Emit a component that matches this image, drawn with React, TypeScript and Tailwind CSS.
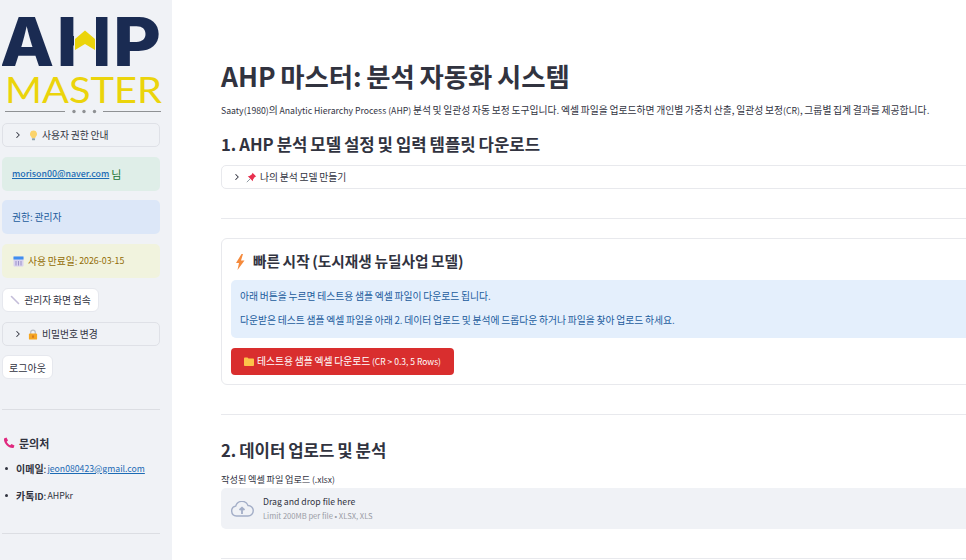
import React from "react";
import { ChevronRight } from "lucide-react";

const font = { fontFamily: '"Noto Sans CJK KR", sans-serif' };

function Logo() {
  return (
    <svg width="160" height="118" viewBox="0 0 160 118" className="block">
      <g fontFamily="Inter, sans-serif" fontWeight="800" fontSize="67" fill="#1a2b52">
        <text transform="translate(-2 66) scale(1.05 1)">A</text>
        <text transform="translate(54.500 66) scale(1.1 1)">H</text>
        <text transform="translate(111 66) scale(1.1 1)">P</text>
      </g>
      <rect x="72" y="17" width="22" height="49" fill="#f0f2f6" />
      <polygon points="73,39 83,30.500 93,39 93,50 83,44 73,50" fill="#ebd40b" />
      <text x="3" y="103" textLength="157" lengthAdjust="spacingAndGlyphs" fontFamily="Lato, sans-serif" fontWeight="400" fontSize="36" fill="#ebd40b">MASTER</text>
      <line x1="3" x2="63" y1="111.500" y2="111.500" stroke="#8f9194" strokeWidth="1" />
      <line x1="101" x2="159" y1="111.500" y2="111.500" stroke="#8f9194" strokeWidth="1" />
      <circle cx="72" cy="111.500" r="1.700" fill="#8f9194" />
      <circle cx="82" cy="111.500" r="1.700" fill="#8f9194" />
      <circle cx="92.500" cy="111.500" r="1.700" fill="#8f9194" />
    </svg>
  );
}

function Expander({ icon, label }: { icon: React.ReactNode; label: string }) {
  return (
    <div className="flex h-6 items-center rounded-[5px] border border-[#dfe1e7] pl-[10px] text-[9.800px] [word-spacing:-0.05em] text-[#31333f]">
      <ChevronRight size={10} strokeWidth={2.5} className="text-[#31333f]" />
      <span className="ml-[4px] flex w-[12px] justify-center">{icon}</span>
      <span className="ml-[3px]">{label}</span>
    </div>
  );
}

function Bulb() {
  return (
    <svg width="9" height="11" viewBox="0 0 10 12">
      <path d="M5 0.500a4 4 0 0 1 2.400 7.200L6.800 9H3.200l-.6-1.300A4 4 0 0 1 5 .5z" fill="#fbd36b" />
      <rect x="3.300" y="9" width="3.400" height="2.400" rx=".7" fill="#8fa3ad" />
    </svg>
  );
}

function Lock() {
  return (
    <svg width="10" height="11" viewBox="0 0 11 12">
      <path d="M3 6V3.600a2.500 2.500 0 0 1 5 0V6" fill="none" stroke="#b8bcc2" strokeWidth="1.300" />
      <rect x="1" y="5" width="9" height="6.600" rx="1" fill="#f5a623" />
      <rect x="4.800" y="7" width="1.400" height="2.600" fill="#c9651b" />
    </svg>
  );
}

function Sidebar() {
  return (
    <aside className="flex h-[560px] w-[172px] shrink-0 flex-col overflow-hidden bg-[#f0f2f6] pl-[2px] pr-3">
      <div className="h-[123px] shrink-0"><Logo /></div>
      <Expander icon={<Bulb />} label="사용자 권한 안내" />
      <div className="mt-[10px] flex h-[34px] items-center rounded-[5px] bg-[#dfeee8] px-[10px] text-[10px] text-[#177233]">
        <a className="text-[8.800px] font-medium text-[#1c6bb5] underline">morison00@naver.com</a>
        <span className="ml-[2px] text-[11px]">님</span>
      </div>
      <div className="mt-[9px] flex h-[34px] items-center rounded-[5px] bg-[#dce7f8] px-[10px] text-[9.800px] [word-spacing:-0.05em] text-[#1c5c9c]">권한: 관리자</div>
      <div className="mt-[10px] flex h-[34px] items-center rounded-[5px] bg-[#f1f3de] px-[10px] text-[9.800px] [word-spacing:-0.05em] text-[#926c05]">
        <svg width="11" height="11" viewBox="0 0 11 11" className="ml-[1px] mr-[4px]">
          <rect x=".5" y=".5" width="10" height="10" rx="1" fill="#d9d2ef" />
          <rect x=".5" y=".5" width="10" height="3" fill="#3f8ef0" />
          <path d="M3 5v4.500M5.500 5v4.500M8 5v4.500" stroke="#9c93c9" strokeWidth="1" />
        </svg>
        사용 만료일:&nbsp;<span className="text-[8.800px]">2026-03-15</span>
      </div>
      <button className="mt-[10px] flex h-6 w-[97px] items-center justify-center gap-[4px] rounded-[6px] border border-[#e6e8ee] bg-white text-[9.800px] [word-spacing:-0.05em] text-[#31333f]">
        <svg width="10" height="10" viewBox="0 0 10 10"><path d="M1.500 1.500 8.500 8.500" stroke="#c4bdd9" strokeWidth="1.600" strokeLinecap="round" /></svg>
        관리자 화면 접속
      </button>
      <div className="mt-[10px]"><Expander icon={<Lock />} label="비밀번호 변경" /></div>
      <button className="mt-[9px] h-6 w-[51px] rounded-[6px] border border-[#e6e8ee] bg-white text-[10px] text-[#31333f]">로그아웃</button>
      <hr className="mt-[30px] border-t border-[#dcdee3]" />
      <div className="mt-[25px] flex items-center gap-[4px] text-[11px] font-bold text-[#31333f]">
        <svg width="12" height="12" viewBox="0 0 12 12" className="ml-[1px]">
          <path d="M1 1.500 3.500.5 5 3.500 3.700 4.800C4.300 6.300 5.700 7.700 7.200 8.300L8.500 7 11.500 8.500 10.500 11C5.500 11.500.5 6.500 1 1.500z" fill="#e0297f" />
        </svg>
        문의처
      </div>
      <ul className="mt-[10px] text-[10px] whitespace-nowrap text-[#31333f]">
        <li className="flex h-[14px] items-center">
          <span className="ml-[3px] mr-[8px] h-[3px] w-[3px] shrink-0 rounded-full bg-[#31333f]" />
          <b className="font-semibold">이메일</b>:<a className="ml-[1px] text-[8.700px] text-[#1c6bb5] underline">jeon080423@gmail.com</a>
        </li>
        <li className="mt-[13px] flex h-[14px] items-center">
          <span className="ml-[3px] mr-[8px] h-[3px] w-[3px] shrink-0 rounded-full bg-[#31333f]" />
          <b className="font-semibold">카톡<span className="text-[8.800px]">ID</span></b>:<span className="ml-[1px] text-[8.800px]">AHPkr</span>
        </li>
      </ul>
      <hr className="mt-[30px] border-t border-[#dcdee3]" />
    </aside>
  );
}

function Main() {
  return (
    <main className="h-[560px] min-w-0 flex-1 overflow-hidden bg-white pl-[49px] text-[#31333f]">
      <div className="w-[900px]">
        <h1 className="mt-[57px] h-[38px] text-[26.400px] leading-[38px] font-bold [word-spacing:-0.05em] whitespace-nowrap">AHP 마스터: 분석 자동화 시스템</h1>
        <p className="mt-[6px] h-[18px] text-[9.800px] leading-[18px] [word-spacing:-0.05em] whitespace-nowrap"><span className="text-[8.700px]">Saaty(1980)</span>의 <span className="text-[8.700px] [word-spacing:0]">Analytic Hierarchy Process (AHP)</span> 분석 및 일관성 자동 보정 도구입니다. 엑셀 파일을 업로드하면 개인별 가중치 산출, 일관성 보정<span className="text-[8.700px]">(CR)</span>, 그룹별 집계 결과를 제공합니다.</p>
        <h2 className="mt-[11px] h-7 text-[16.700px] leading-7 font-semibold [word-spacing:-0.05em] whitespace-nowrap">1. AHP 분석 모델 설정 및 입력 템플릿 다운로드</h2>
        <div className="mt-[7px] flex h-6 items-center rounded-[5px] border border-[#e8e9ed] pl-[10px] text-[9.800px] [word-spacing:-0.05em]">
          <ChevronRight size={10} strokeWidth={2.5} />
          <svg width="11" height="11" viewBox="0 0 11 11" className="ml-[4px] mr-[3px]">
            <path d="M6.500.800 10.200 4.500 8.800 5 7 7.500 6.800 9.200 1.800 4.200 3.500 4 6 2.200z" fill="#e8304f" />
            <path d="M4 7 .800 10.200" stroke="#8f9aa3" strokeWidth="1" />
          </svg>
          나의 분석 모델 만들기
        </div>
        <hr className="mt-[29px] border-t border-[#e8e9ed]" />
        <section className="mt-[19px] h-[147px] rounded-[6px] border border-[#e8e9ed] pl-[9px] pr-[9px]">
          <div className="flex h-[41px] items-center pt-[4px] text-[14.700px] font-semibold [word-spacing:-0.05em] whitespace-nowrap">
            <svg width="10" height="16" viewBox="0 0 10 16" className="ml-[4px] mr-[8px]">
              <path d="M6.500 0 1 9h3l-1.500 7L9.500 6.500H6L8 0z" fill="#f58a3c" />
            </svg>
            빠른 시작 (도시재생 뉴딜사업 모델)
          </div>
          <div className="h-[58px] rounded-[5px] bg-[#e4effc] px-[9px] text-[9.800px] [word-spacing:-0.05em] text-[#1c5c9c]">
            <p className="pt-[9px] leading-[14px]">아래 버튼을 누르면 테스트용 샘플 엑셀 파일이 다운로드 됩니다.</p>
            <p className="mt-[10px] leading-[14px]">다운받은 테스트 샘플 엑셀 파일을 아래 2. 데이터 업로드 및 분석에 드롭다운 하거나 파일을 찾아 업로드 하세요.</p>
          </div>
          <button className="mt-[10px] flex h-[27px] w-[223px] items-center justify-center rounded-[4px] bg-[#d92e2e] text-[9.800px] [word-spacing:-0.05em] whitespace-nowrap text-white">
            <svg width="10" height="9" viewBox="0 0 10 9" className="mr-[3px]">
              <path d="M0 1.500C0 1 .4.500 1 .500h2.500l1 1H9c.5 0 1 .4 1 1V8c0 .5-.4 1-1 1H1c-.6 0-1-.5-1-1z" fill="#fdc34a" />
            </svg>
            테스트용 샘플 엑셀 다운로드&nbsp;<span className="text-[8.500px] [word-spacing:0]">(CR &gt; 0.3, 5 Rows)</span>
          </button>
        </section>
        <hr className="mt-[29px] border-t border-[#e8e9ed]" />
        <h2 className="mt-[20px] h-[30px] text-[16.700px] leading-[30px] font-semibold [word-spacing:-0.05em] whitespace-nowrap">2. 데이터 업로드 및 분석</h2>
        <div className="mt-[7px] h-[14px] text-[9.200px] leading-[14px] [word-spacing:-0.05em]">작성된 엑셀 파일 업로드 <span className="text-[8.500px]">(.xlsx)</span></div>
        <div className="mt-[2px] flex h-[41px] items-center rounded-[5px] bg-[#f0f2f6] pl-[9px]">
          <svg width="24" height="16" viewBox="0 0 24 16" fill="none" stroke="#a3aec7" strokeWidth="1.400">
            <path d="M6.500 15a5 5 0 0 1-.8-9.900A6.500 6.500 0 0 1 18 4.500 5.200 5.200 0 0 1 18 15z" />
            <path d="M12 13V7M9.500 9 12 6.800 14.500 9" strokeWidth="1.800" />
          </svg>
          <div className="ml-[9px]">
            <div className="text-[8.700px] leading-[14px]">Drag and drop file here</div>
            <div className="text-[7.600px] leading-[13px] text-[#9a9ca5]">Limit 200MB per file • XLSX, XLS</div>
          </div>
        </div>
        <hr className="mt-[29px] border-t border-[#e8e9ed]" />
      </div>
    </main>
  );
}

export default function App() {
  return (
    <div style={font} className="flex h-[560px] w-[966px] overflow-hidden">
      <Sidebar />
      <Main />
    </div>
  );
}
